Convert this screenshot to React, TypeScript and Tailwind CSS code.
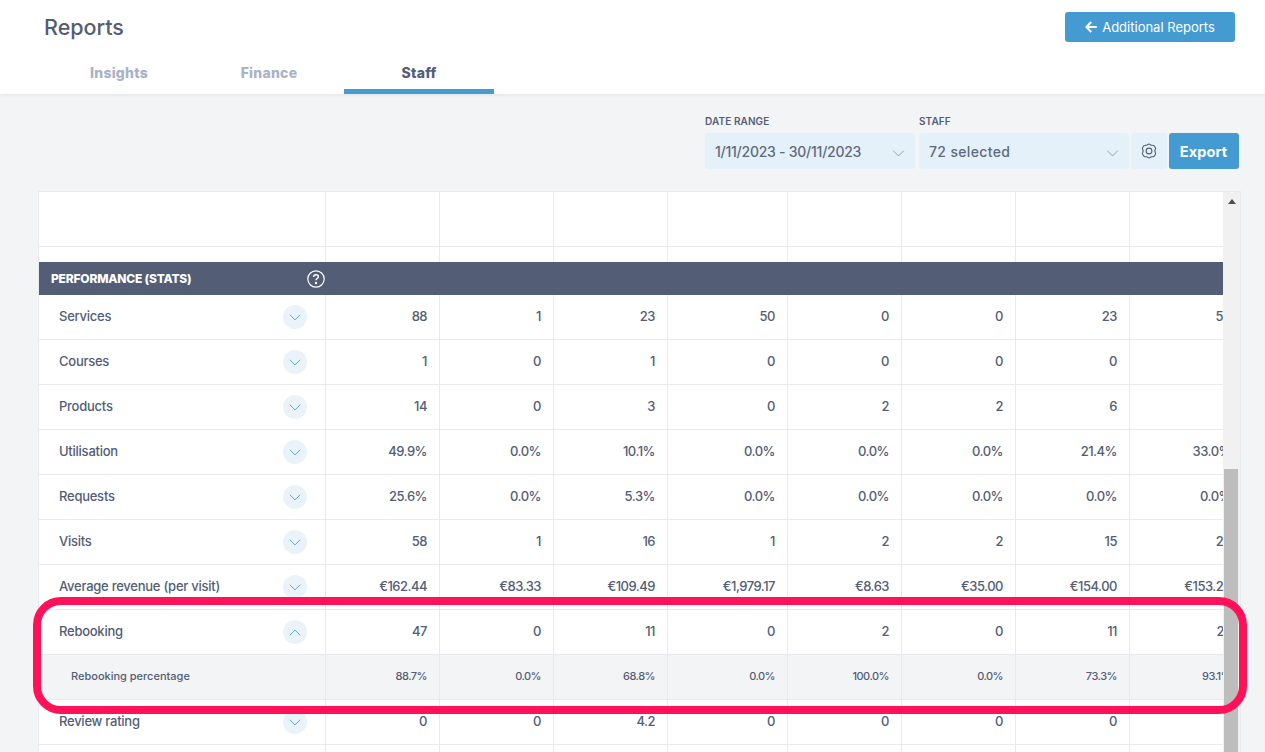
import React from "react";

const font = { fontFamily: '"Inter", "Liberation Sans", sans-serif' };

type Row = { label: string; values: string[]; open?: boolean };

const rows: Row[] = [
  { label: "Services", values: ["88", "1", "23", "50", "0", "0", "23", "50"] },
  { label: "Courses", values: ["1", "0", "1", "0", "0", "0", "0", "0"] },
  { label: "Products", values: ["14", "0", "3", "0", "2", "2", "6", "0"] },
  { label: "Utilisation", values: ["49.9%", "0.0%", "10.1%", "0.0%", "0.0%", "0.0%", "21.4%", "33.0%"] },
  { label: "Requests", values: ["25.6%", "0.0%", "5.3%", "0.0%", "0.0%", "0.0%", "0.0%", "0.0%"] },
  { label: "Visits", values: ["58", "1", "16", "1", "2", "2", "15", "29"] },
  { label: "Average revenue (per visit)", values: ["€162.44", "€83.33", "€109.49", "€1,979.17", "€8.63", "€35.00", "€154.00", "€153.28"] },
  { label: "Rebooking", values: ["47", "0", "11", "0", "2", "0", "11", "27"], open: true },
];

const sub = ["88.7%", "0.0%", "68.8%", "0.0%", "100.0%", "0.0%", "73.3%", "93.1%"];
const grid = "grid grid-cols-[287px_114px_114px_114px_120px_114px_114px_114px_114px] w-[1205px]";

function Chevron({ up, className }: { up?: boolean; className: string }) {
  return (
    <svg viewBox="0 0 14 8" className={className} fill="none" stroke="currentColor" strokeWidth="1">
      <path d={up ? "M1 7.2 7 1.2l6 6" : "M1 .8l6 6 6-6"} />
    </svg>
  );
}

function DataRow({ row }: { row: Row }) {
  return (
    <div className={`${grid} h-[45px] border-b border-[#e8eaf0]`}>
      <div className="flex items-center justify-between border-r border-[#e8eaf0] pl-5 pr-[18px]">
        <span className="-mt-[1px] text-[13px] font-[450] tracking-[-0.25px] text-[#535d75]">{row.label}</span>
        <span className="flex h-6 w-6 items-center justify-center rounded-full bg-[#eaf3fa] text-[#449bd2]">
          <Chevron up={row.open} className="h-[7px] w-3" />
        </span>
      </div>
      {row.values.map((v, i) => (
        <div key={i} className="flex items-center justify-end border-r border-[#e8eaf0] pr-3 text-[13px] font-[450] tracking-[-0.5px] text-[#535d75]">
          <span className="-mt-[1px]">{v}</span>
        </div>
      ))}
    </div>
  );
}

function BlankCells() {
  return (
    <>
      {Array.from({ length: 9 }).map((_, i) => (
        <div key={i} className="border-r border-[#e8eaf0]" />
      ))}
    </>
  );
}

export default function App() {
  return (
    <div style={font} className="relative h-[752px] w-[1265px] overflow-hidden bg-[#f3f4f6]">
      <header className="h-[94px] bg-white shadow-[0_1px_4px_rgba(0,0,0,0.08)]">
        <div className="flex items-start justify-between pl-11 pr-[30px] pt-3">
          <h1 className="pt-[2px] text-[21.5px] font-medium leading-[26px] text-[#535d75]">Reports</h1>
          <button className="flex h-[30px] w-[170px] items-center justify-center gap-[5px] rounded-[3px] bg-[#449bd2] text-[13px] text-white">
            <svg viewBox="0 0 12 12" className="h-3 w-3" fill="none" stroke="currentColor" strokeWidth="2">
              <path d="M11.8 6H1.4M6.2 1 1.4 6l4.8 5" />
            </svg>
            <span className="pt-[1px]">Additional Reports</span>
          </button>
        </div>
        <nav className="flex pl-11 pt-[10px]">
          {["Insights", "Finance", "Staff"].map((t) => (
            <div
              key={t}
              className={`flex h-[42px] w-[150px] items-start justify-center pt-[12px] text-[14px] font-extrabold leading-[18px] tracking-[0.25px] ${
                t === "Staff" ? "border-b-[5px] border-[#449bd2] text-[#535d75]" : "text-[#a9b2c6]"
              }`}
            >
              {t}
            </div>
          ))}
        </nav>
      </header>

      <div className="flex justify-end gap-[4px] pr-[26px] pt-[21px]">
        <div className="w-[210px]">
          <div className="text-[10px] font-semibold uppercase leading-3 tracking-[0.1px] text-[#535d75]">Date range</div>
          <div className="mt-[6px] flex h-9 items-center justify-between rounded-[3px] bg-[#e5f1f8] px-[10px] text-[14px] font-medium tracking-[-0.25px] text-[#5f6980]">
            <span>1/11/2023 - 30/11/2023</span>
            <Chevron className="mt-1 h-[7px] w-[13px] text-[#8a93a6]" />
          </div>
        </div>
        <div className="w-[210px]">
          <div className="text-[10px] font-semibold uppercase leading-3 tracking-[0.1px] text-[#535d75]">Staff</div>
          <div className="mt-[6px] flex h-9 items-center justify-between rounded-[3px] bg-[#e5f1f8] px-[10px] text-[14px] font-medium tracking-[0.35px] text-[#5f6980]">
            <span>72 selected</span>
            <Chevron className="mt-1 h-[7px] w-[13px] text-[#8a93a6]" />
          </div>
        </div>
        <div className="-ml-[2px] flex w-[108px] items-end gap-[2px]">
          <div className="flex h-9 w-9 items-center justify-center rounded-[3px] bg-[#e5f1f8] text-[#535d75]">
            <svg viewBox="0 0 16 16" className="h-4 w-4" fill="none" stroke="currentColor" strokeWidth="1.1" strokeLinejoin="round">
              <path d="M7 1.4Q8 .8 9 1.4L10.2 2.2 11.9 2.3Q13 2.3 13.5 3.2L14.3 4.6Q14.8 5.5 14.4 6.3L13.8 8 14.4 9.7Q14.8 10.5 14.3 11.4L13.5 12.8Q13 13.7 11.9 13.7L10.2 13.8 9 14.6Q8 15.2 7 14.6L5.8 13.8 4.1 13.7Q3 13.7 2.5 12.8L1.7 11.4Q1.2 10.5 1.6 9.7L2.2 8 1.6 6.3Q1.2 5.5 1.7 4.6L2.5 3.2Q3 2.3 4.1 2.3L5.8 2.2Z" />
              <circle cx="8" cy="8" r="2.9" />
            </svg>
          </div>
          <button className="h-9 w-[70px] rounded-[3px] bg-[#449bd2] pt-[1px] pr-[1px] text-[14.5px] font-bold tracking-[0.1px] text-white">Export</button>
        </div>
      </div>

      <div className="ml-[38px] mt-[22px] flex h-[600px] w-[1203px] border border-[#e8eaf0] bg-white">
        <div className="min-w-0 flex-1 overflow-hidden">
          <div className={`${grid} h-[55px] border-b border-[#e8eaf0]`}>
            <BlankCells />
          </div>
          <div className={`${grid} h-[15px]`}>
            <BlankCells />
          </div>
          <div className="flex h-[33px] w-[1205px] items-center bg-[#535d75]">
            <div className="flex w-[287px] items-center justify-between pl-3 pr-[1px]">
              <span className="text-[12px] font-extrabold tracking-[-0.2px] text-white">PERFORMANCE (STATS)</span>
              <svg viewBox="0 0 18 18" className="h-[18px] w-[18px]" fill="none" stroke="white" strokeWidth="1.2">
                <circle cx="9" cy="9" r="8.2" />
                <path d="M6.6 7c0-1.5 1.1-2.3 2.4-2.3s2.4.8 2.4 2.1c0 1.8-2.4 1.7-2.4 3.5" strokeWidth="1.4" />
                <circle cx="9" cy="13" r="0.6" fill="white" />
              </svg>
            </div>
          </div>
          {rows.map((r) => (
            <DataRow key={r.label} row={r} />
          ))}
          <div className={`${grid} h-[45px] border-b border-[#e8eaf0] bg-[#f3f4f6]`}>
            <div className="flex items-center border-r border-[#e8eaf0] pl-8">
              <span className="-mt-[1px] text-[11px] font-[450] tracking-[0px] text-[#535d75]">Rebooking percentage</span>
            </div>
            {sub.map((v, i) => (
              <div key={i} className="flex items-center justify-end border-r border-[#e8eaf0] pr-3 text-[11px] font-[450] tracking-[-0.5px] text-[#535d75]">
                <span className="-mt-[1px]">{v}</span>
              </div>
            ))}
          </div>
          <DataRow row={{ label: "Review rating", values: ["0", "0", "4.2", "0", "0", "0", "0", "0"] }} />
          <div className={`${grid} h-[45px]`}>
            <BlankCells />
          </div>
        </div>
        <div className="relative w-[17px] shrink-0 bg-[#f1f1f1]">
          <div className="mx-auto mt-[7px] h-0 w-0 border-x-[4px] border-b-[5px] border-x-transparent border-b-[#505050]" />
          <div className="absolute left-[1px] right-[2px] top-[277px] h-[400px] bg-[#bdbdbd]" />
        </div>
      </div>

      <div className="absolute left-[33px] top-[597px] h-[117px] w-[1214px] rounded-[28px] border-[8px] border-[#ff1258]" />
    </div>
  );
}
